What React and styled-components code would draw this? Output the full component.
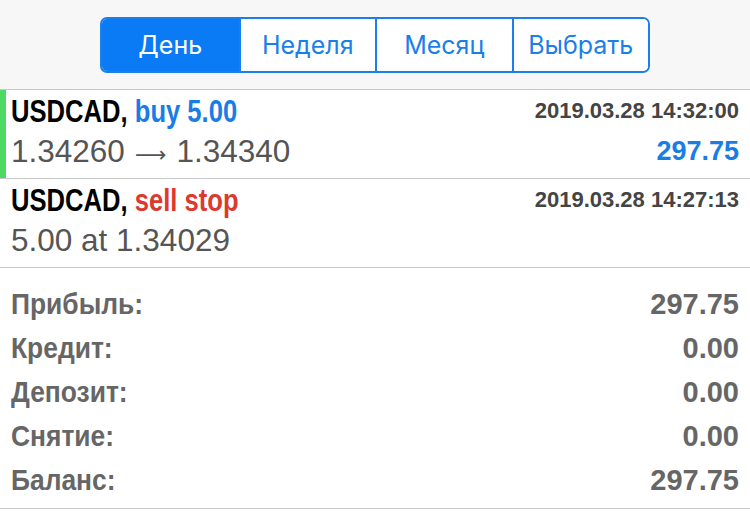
import React, { useState } from "react";
import styled, { createGlobalStyle } from "styled-components";

const GlobalStyle = createGlobalStyle`
  html, body {
    margin: 0;
    padding: 0;
    background: #ffffff;
  }
  body {
    font-family: "Liberation Sans", Arial, sans-serif;
  }
`;

const tabs = ["День", "Неделя", "Месяц", "Выбрать"];

const deals = [
  {
    symbol: "USDCAD",
    action: "buy 5.00",
    kind: "buy",
    time: "2019.03.28 14:32:00",
    from: "1.34260",
    to: "1.34340",
    profit: "297.75",
    open: true,
  },
  {
    symbol: "USDCAD",
    action: "sell stop",
    kind: "sell",
    time: "2019.03.28 14:27:13",
    detail: "5.00 at 1.34029",
    profit: "",
    open: false,
  },
];

const totals = [
  ["Прибыль:", "297.75"],
  ["Кредит:", "0.00"],
  ["Депозит:", "0.00"],
  ["Снятие:", "0.00"],
  ["Баланс:", "297.75"],
];

const App = () => {
  const [active, setActive] = useState(0);

  return (
    <Page>
      <GlobalStyle />
      <Header>
        <Segmented>
          {tabs.map((tab, i) => (
            <Segment key={tab} $active={i === active} onClick={() => setActive(i)}>
              {tab}
            </Segment>
          ))}
        </Segmented>
      </Header>
      {deals.map((deal, i) => (
        <DealRow key={i} $open={deal.open}>
          <Title>
            <Narrow $scale={0.8}>
              {deal.symbol}, <Action $kind={deal.kind}>{deal.action}</Action>
            </Narrow>
          </Title>
          <Time>{deal.time}</Time>
          <Detail>
            {deal.detail ? (
              deal.detail
            ) : (
              <>
                {deal.from}
                <Arrow>⟶</Arrow>
                {deal.to}
              </>
            )}
          </Detail>
          <Profit>{deal.profit}</Profit>
        </DealRow>
      ))}
      <Totals>
        {totals.map(([label, value]) => (
          <TotalRow key={label}>
            <Narrow $scale={0.88}>{label}</Narrow>
            <Amount>{value}</Amount>
          </TotalRow>
        ))}
      </Totals>
    </Page>
  );
};

const Page = styled.div`
  width: 750px;
  min-height: 520px;
  background: #fff;
`;

const Header = styled.div`
  height: 90px;
  background: #f7f7f7;
  border-bottom: 1px solid #c8c8c8;
  display: flex;
  justify-content: center;
  padding-top: 17px;
  box-sizing: border-box;
`;

const Segmented = styled.div`
  display: grid;
  grid-template-columns: repeat(4, 1fr);
  width: 550px;
  height: 56px;
  border: 2px solid #1a7fe9;
  border-radius: 7px;
  box-sizing: border-box;
  overflow: hidden;
`;

const Segment = styled.button`
  border: none;
  border-left: 2px solid #1a7fe9;
  background: ${(p) => (p.$active ? "#0a7bf5" : "#ffffff")};
  color: ${(p) => (p.$active ? "#ffffff" : "#1a7fe9")};
  font-family: Inter, "Liberation Sans", sans-serif;
  font-size: 25px;
  padding: 0;
  cursor: pointer;
  &:first-child {
    border-left: none;
  }
`;

const DealRow = styled.div`
  display: grid;
  grid-template-columns: 1fr auto;
  grid-template-rows: 40px 41px;
  align-items: center;
  height: 89px;
  box-sizing: border-box;
  padding: 1px 11px 0 11px;
  border-bottom: 1px solid #c8c8c8;
  box-shadow: ${(p) => (p.$open ? "inset 6px 0 0 #4cd964" : "none")};
`;

/* condensed headline face is not installed, so squeeze the bold face */
const Narrow = styled.span`
  display: inline-block;
  white-space: nowrap;
  transform: scaleX(${(p) => p.$scale});
  transform-origin: left center;
`;

const Title = styled.div`
  font-weight: 700;
  font-size: 32px;
  color: #000;
  white-space: nowrap;
`;

const Action = styled.span`
  color: ${(p) => (p.$kind === "buy" ? "#1a7de6" : "#dc3a2e")};
`;

const Time = styled.div`
  font-weight: 700;
  font-size: 22px;
  color: #444;
  text-align: right;
`;

const Detail = styled.div`
  font-size: 31.5px;
  color: #555;
  white-space: nowrap;
`;

const Arrow = styled.span`
  font-family: "DejaVu Sans", sans-serif;
  font-size: 22px;
  margin: 0 10px;
`;

const Profit = styled.div`
  font-weight: 700;
  font-size: 27px;
  color: #1a7de6;
  text-align: right;
`;

const Totals = styled.div`
  padding: 14px 11px 6px 11px;
  border-bottom: 1px solid #c8c8c8;
`;

const TotalRow = styled.div`
  display: flex;
  justify-content: space-between;
  align-items: center;
  height: 44px;
  font-weight: 700;
  font-size: 30px;
  color: #666;
`;

const Amount = styled.span`
  font-size: 29px;
`;

export default App;
